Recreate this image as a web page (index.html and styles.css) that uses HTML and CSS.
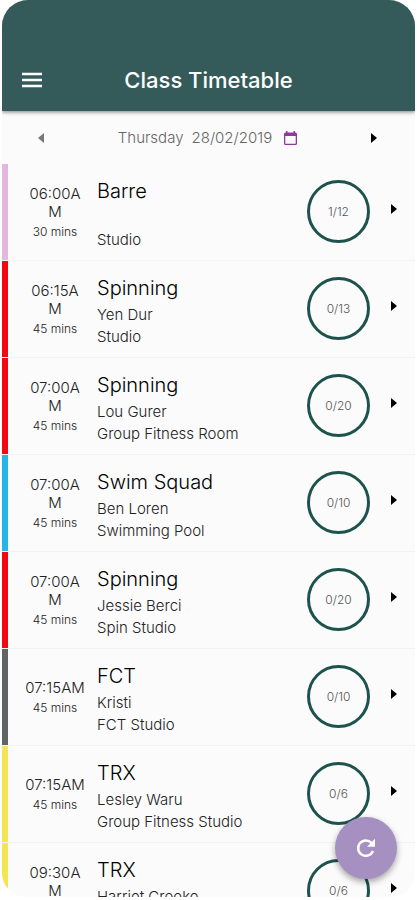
FILE: index.html
```html
<!DOCTYPE html>
<html lang="en">
<head>
<meta charset="utf-8">
<meta name="viewport" content="width=device-width, initial-scale=1">
<title>Class Timetable</title>
<link rel="stylesheet" href="styles.css">
</head>
<body>
<div class="app">
  <header class="topbar">
    <button class="icon-btn" aria-label="Menu">
      <svg width="22" height="16" viewBox="0 0 22 16"><path d="M1 2h20M1 8h20M1 14h20" stroke="currentColor" stroke-width="2.4"/></svg>
    </button>
    <h1 class="topbar-title">Class Timetable</h1>
  </header>
  <nav class="datebar" aria-label="Date">
    <button class="icon-btn prev" aria-label="Previous day"><svg width="6" height="10" viewBox="0 0 6 10"><path d="M6 0v10L0 5z" fill="currentColor"/></svg></button>
    <button class="date"><span>Thursday</span><span>28/02/2019</span>
      <svg class="calendar" width="13" height="14" viewBox="0 0 13 14"><path d="M2 0h1.500v1.500h6V0H11v1.500h.5A1.500 1.500 0 0 1 13 3v9.500a1.500 1.500 0 0 1-1.500 1.500h-10A1.500 1.500 0 0 1 0 12.500V3a1.500 1.500 0 0 1 1.500-1.500H2zM1.300 5v7.200q0 .5.500.5h9.400q.5 0 .5-.5V5z" fill="currentColor" fill-rule="evenodd"/></svg>
    </button>
    <button class="icon-btn next" aria-label="Next day"><svg width="6" height="10" viewBox="0 0 6 10"><path d="M0 0v10l6-5z" fill="currentColor"/></svg></button>
  </nav>
  <main class="list">
    <article class="row pink">
      <div class="when"><div class="time">06:00A<br>M</div><div class="mins">30 mins</div></div>
      <div class="info"><h2>Barre</h2><p></p><p>Studio</p></div>
      <div class="count">1/12</div>
      <button class="icon-btn go" aria-label="Open Barre"><svg width="6" height="10" viewBox="0 0 6 10"><path d="M0 0v10l6-5z" fill="currentColor"/></svg></button>
    </article>
    <article class="row red">
      <div class="when"><div class="time">06:15A<br>M</div><div class="mins">45 mins</div></div>
      <div class="info"><h2>Spinning</h2><p>Yen Dur</p><p>Studio</p></div>
      <div class="count">0/13</div>
      <button class="icon-btn go" aria-label="Open Spinning"><svg width="6" height="10" viewBox="0 0 6 10"><path d="M0 0v10l6-5z" fill="currentColor"/></svg></button>
    </article>
    <article class="row red">
      <div class="when"><div class="time">07:00A<br>M</div><div class="mins">45 mins</div></div>
      <div class="info"><h2>Spinning</h2><p>Lou Gurer</p><p>Group Fitness Room</p></div>
      <div class="count">0/20</div>
      <button class="icon-btn go" aria-label="Open Spinning"><svg width="6" height="10" viewBox="0 0 6 10"><path d="M0 0v10l6-5z" fill="currentColor"/></svg></button>
    </article>
    <article class="row blue">
      <div class="when"><div class="time">07:00A<br>M</div><div class="mins">45 mins</div></div>
      <div class="info"><h2>Swim Squad</h2><p>Ben Loren</p><p>Swimming Pool</p></div>
      <div class="count">0/10</div>
      <button class="icon-btn go" aria-label="Open Swim Squad"><svg width="6" height="10" viewBox="0 0 6 10"><path d="M0 0v10l6-5z" fill="currentColor"/></svg></button>
    </article>
    <article class="row red">
      <div class="when"><div class="time">07:00A<br>M</div><div class="mins">45 mins</div></div>
      <div class="info"><h2>Spinning</h2><p>Jessie Berci</p><p>Spin Studio</p></div>
      <div class="count">0/20</div>
      <button class="icon-btn go" aria-label="Open Spinning"><svg width="6" height="10" viewBox="0 0 6 10"><path d="M0 0v10l6-5z" fill="currentColor"/></svg></button>
    </article>
    <article class="row grey">
      <div class="when"><div class="time">07:15AM</div><div class="mins">45 mins</div></div>
      <div class="info"><h2>FCT</h2><p>Kristi</p><p>FCT Studio</p></div>
      <div class="count">0/10</div>
      <button class="icon-btn go" aria-label="Open FCT"><svg width="6" height="10" viewBox="0 0 6 10"><path d="M0 0v10l6-5z" fill="currentColor"/></svg></button>
    </article>
    <article class="row yellow">
      <div class="when"><div class="time">07:15AM</div><div class="mins">45 mins</div></div>
      <div class="info"><h2>TRX</h2><p>Lesley Waru</p><p>Group Fitness Studio</p></div>
      <div class="count">0/6</div>
      <button class="icon-btn go" aria-label="Open TRX"><svg width="6" height="10" viewBox="0 0 6 10"><path d="M0 0v10l6-5z" fill="currentColor"/></svg></button>
    </article>
    <article class="row yellow">
      <div class="when"><div class="time">09:30A<br>M</div><div class="mins">45 mins</div></div>
      <div class="info"><h2>TRX</h2><p>Harriet Crooke</p></div>
      <div class="count">0/6</div>
      <button class="icon-btn go" aria-label="Open TRX"><svg width="6" height="10" viewBox="0 0 6 10"><path d="M0 0v10l6-5z" fill="currentColor"/></svg></button>
    </article>
  </main>
  <button class="fab" aria-label="Refresh">
    <svg width="20" height="20" viewBox="0 0 20 20"><path d="M17 13A7.700 7.700 0 1 1 15.500 4.900" fill="none" stroke="currentColor" stroke-width="2.500"/><path d="M19 .8v8h-8z" fill="currentColor"/></svg>
  </button>
</div>
</body>
</html>
```
FILE: styles.css
```css
* { box-sizing: border-box; }
body {
  margin: 0;
  background: #fff;
  font-family: Inter, "Liberation Sans", sans-serif;
  color: #222;
}
h1, h2, p { margin: 0; font-weight: 300; }
button {
  padding: 0;
  border: 0;
  background: none;
  font: inherit;
  color: inherit;
  cursor: pointer;
}
svg { display: block; }
.app {
  position: relative;
  display: flex;
  flex-direction: column;
  height: calc(100vh - 3px);
  margin: 0 2px;
  overflow: hidden;
  background: #fbfbfb;
  border-radius: 26px 26px 24px 24px;
}
.topbar {
  display: grid;
  grid-template-columns: 60px 1fr 60px;
  align-items: center;
  flex: none;
  height: 111px;
  padding-top: 49px;
  background: #345b59;
  color: #fff;
  box-shadow: 0 1px 4px rgba(0, 0, 0, .5);
}
.icon-btn { display: grid; place-items: center; }
.topbar-title {
  font-size: 22px;
  line-height: 28px;
  font-weight: 500;
  text-align: center;
}
.datebar {
  display: flex;
  align-items: center;
  justify-content: space-between;
  flex: none;
  height: 53px;
  padding: 0 38px 0 36px;
}
.date {
  display: flex;
  align-items: center;
  gap: 8px;
  font-size: 15px;
  line-height: 20px;
  font-weight: 300;
  color: #666;
}
.calendar { margin-left: 4px; color: #8e3a9d; }
.prev { color: #777; }
.next { color: #000; }
.list { flex: 1; min-height: 0; overflow: hidden; }
.row {
  display: grid;
  grid-template-columns: 62px 1fr 63px 27px;
  align-items: start;
  height: 97px;
  padding: 16px 18px 0 22px;
  border-bottom: 1px solid #f3f3f3;
  box-shadow: inset 6px 0 var(--category);
}
.pink { --category: #e2b9dc; }
.red { --category: #f20a12; }
.blue { --category: #27b5e8; }
.grey { --category: #606465; }
.yellow { --category: #f2e653; }
.when {
  display: flex;
  flex-direction: column;
  justify-content: center;
  gap: 2px;
  height: 66px;
  text-align: center;
  font-weight: 300;
  color: #222;
}
.time { font-size: 15px; line-height: 18px; }
.mins { font-size: 12px; line-height: 18px; }
.info { padding-left: 11px; color: #222; }
.info h2 { margin-bottom: 5px; font-size: 20px; line-height: 22px; color: #000; }
.info p { height: 22px; font-size: 15px; line-height: 22px; white-space: nowrap; }
.count {
  display: grid;
  place-items: center;
  height: 63px;
  border: 3px solid #1d534c;
  border-radius: 50%;
  font-size: 12px;
  font-weight: 300;
  color: #555;
}
.go {
  justify-items: end;
  height: 58px;
  color: #000;
}
.fab {
  position: absolute;
  right: 18px;
  bottom: 18px;
  display: grid;
  place-items: center;
  width: 62px;
  height: 62px;
  border-radius: 50%;
  background: #a690c1;
  color: #fff;
  box-shadow: 0 3px 6px rgba(0, 0, 0, .35);
}
```
